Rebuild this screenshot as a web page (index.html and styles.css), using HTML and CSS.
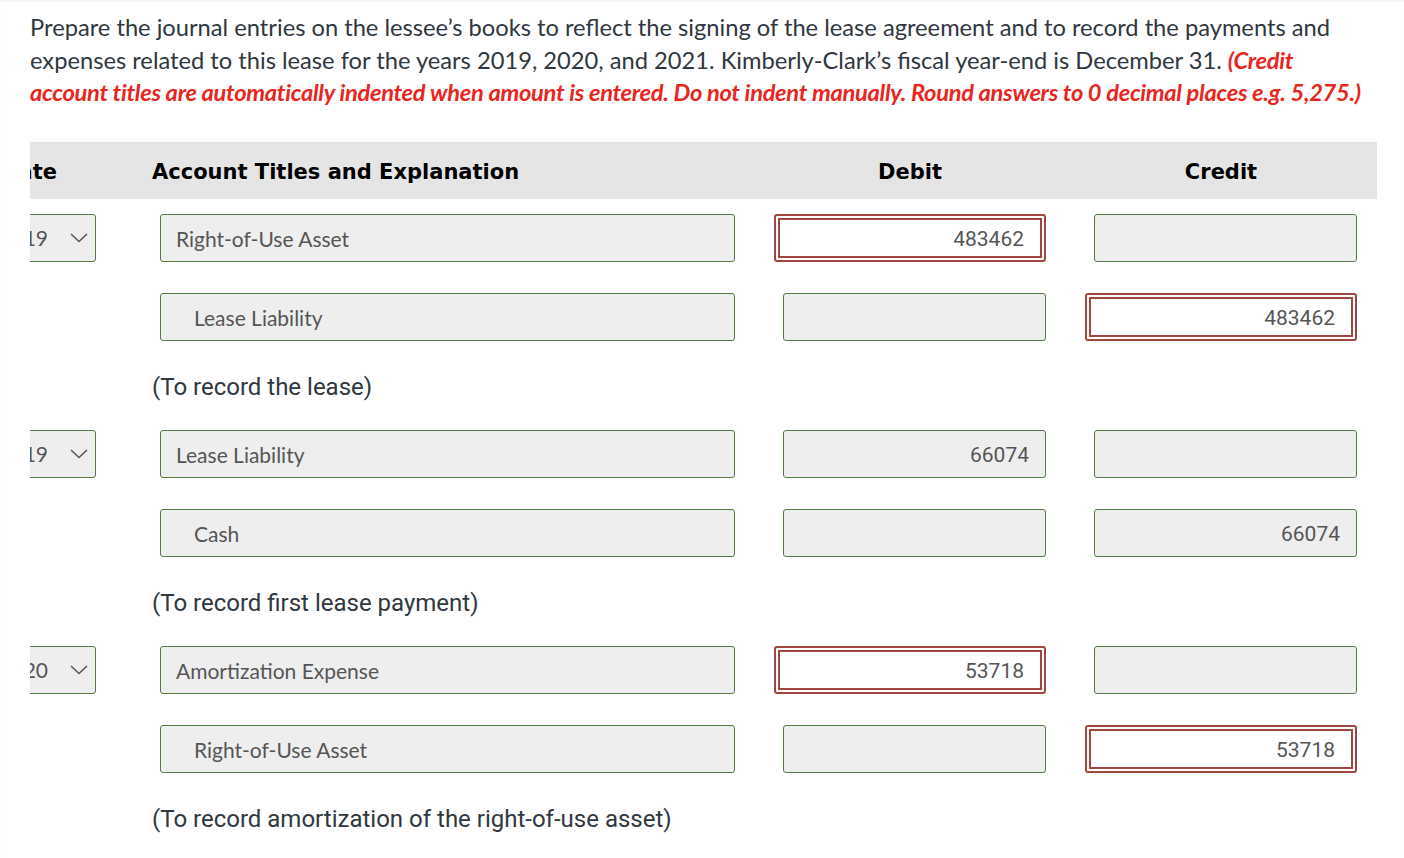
FILE: index.html
```html
<!DOCTYPE html>
<html lang="en">
<head>
<meta charset="utf-8">
<title>Journal entries</title>
<link rel="stylesheet" href="styles.css">
</head>
<body>
<div class="page">
  <p class="intro">Prepare the journal entries on the lessee’s books to reflect the signing of the lease agreement and to record the payments and expenses related to this lease for the years 2019, 2020, and 2021. Kimberly-Clark’s fiscal year-end is December 31. <em class="note">(Credit account titles are automatically indented when amount is entered. Do not indent manually. Round answers to 0 decimal places e.g. 5,275.)</em></p>

  <div class="sheet">
    <div class="table">
      <div class="grid head">
        <div class="h-date">Date</div>
        <div class="h-acct">Account Titles and Explanation</div>
        <div class="h-num">Debit</div>
        <div class="h-num h-credit">Credit</div>
      </div>

      <div class="entries">
        <div class="entry">
          <div class="grid line">
            <div class="date-cell"><div class="select"><span class="sel-text">Jan. 1, 2019</span><svg class="chev" viewBox="0 0 18 10"><path d="M1 1 L9 8.5 L17 1"/></svg></div></div>
            <div class="acct-cell"><div class="box acct">Right-of-Use Asset</div></div>
            <div class="num-cell"><div class="red"><div class="red-in">483462</div></div></div>
            <div class="num-cell credit"><div class="box num"></div></div>
          </div>
          <div class="grid line">
            <div class="date-cell"></div>
            <div class="acct-cell"><div class="box acct indent">Lease Liability</div></div>
            <div class="num-cell"><div class="box num"></div></div>
            <div class="num-cell credit"><div class="red"><div class="red-in">483462</div></div></div>
          </div>
          <div class="grid expl"><div></div><div class="expl-text">(To record the lease)</div></div>
        </div>

        <div class="entry">
          <div class="grid line">
            <div class="date-cell"><div class="select"><span class="sel-text">Jan. 1, 2019</span><svg class="chev" viewBox="0 0 18 10"><path d="M1 1 L9 8.5 L17 1"/></svg></div></div>
            <div class="acct-cell"><div class="box acct">Lease Liability</div></div>
            <div class="num-cell"><div class="box num">66074</div></div>
            <div class="num-cell credit"><div class="box num"></div></div>
          </div>
          <div class="grid line">
            <div class="date-cell"></div>
            <div class="acct-cell"><div class="box acct indent">Cash</div></div>
            <div class="num-cell"><div class="box num"></div></div>
            <div class="num-cell credit"><div class="box num">66074</div></div>
          </div>
          <div class="grid expl"><div></div><div class="expl-text">(To record first lease payment)</div></div>
        </div>

        <div class="entry">
          <div class="grid line">
            <div class="date-cell"><div class="select"><span class="sel-text">Dec. 31, 2020</span><svg class="chev" viewBox="0 0 18 10"><path d="M1 1 L9 8.5 L17 1"/></svg></div></div>
            <div class="acct-cell"><div class="box acct">Amortization Expense</div></div>
            <div class="num-cell"><div class="red"><div class="red-in">53718</div></div></div>
            <div class="num-cell credit"><div class="box num"></div></div>
          </div>
          <div class="grid line">
            <div class="date-cell"></div>
            <div class="acct-cell"><div class="box acct indent">Right-of-Use Asset</div></div>
            <div class="num-cell"><div class="box num"></div></div>
            <div class="num-cell credit"><div class="red"><div class="red-in">53718</div></div></div>
          </div>
          <div class="grid expl"><div></div><div class="expl-text">(To record amortization of the right-of-use asset)</div></div>
        </div>
      </div>
    </div>
  </div>
</div>
</body>
</html>
```

FILE: styles.css
```css
html, body {
  margin: 0;
  padding: 0;
  background: #ffffff;
}

body {
  font-family: Lato, "Open Sans", sans-serif;
  overflow: hidden;
}

.page {
  padding: 11px 27px 0 30px;
  box-shadow: inset 0 2px 2px -1px rgba(0, 0, 0, 0.08);
  height: 858px;
  box-sizing: border-box;
}

.intro {
  margin: 0;
  font-size: 23.7px;
  line-height: 32.5px;
  color: #2f3740;
  max-width: 1342px;
}

.note {
  font-style: italic;
  font-weight: 700;
  color: #e8261e;
  letter-spacing: -0.3px;
}

.sheet {
  margin-top: 33px;
  width: 1347px;
  overflow: hidden;
}

.table {
  margin-left: -130px;
  width: 1477px;
}

.grid {
  display: grid;
  grid-template-columns: 252px 622px 272px 311px;
}

.head {
  height: 57px;
  box-sizing: border-box;
  padding-top: 3px;
  align-items: center;
  background: #e5e5e5;
  font-family: "DejaVu Sans", Verdana, sans-serif;
  font-weight: 700;
  font-size: 21px;
  color: #000;
}

.h-date {
  text-align: right;
  padding-right: 95px;
}

.h-num {
  text-align: center;
}

.h-credit {
  padding-left: 39px;
}

.entries {
  display: flex;
  flex-direction: column;
  gap: 28px;
  padding-top: 15px;
}

.entry {
  display: flex;
  flex-direction: column;
  gap: 31px;
}

.line {
  height: 48px;
}

.date-cell {
  display: flex;
  justify-content: flex-end;
  padding-right: 56px;
}

.select {
  width: 190px;
  height: 48px;
  box-sizing: border-box;
  display: flex;
  align-items: center;
  padding-right: 7px;
  border: 1px solid #517d44;
  border-radius: 3px;
  background: #eeeeee;
  font-size: 21px;
  color: #555555;
}

.sel-text {
  flex: 1;
  text-align: right;
  white-space: nowrap;
}

.chev {
  flex-shrink: 0;
  width: 18px;
  height: 10px;
  margin-left: 22px;
  fill: none;
  stroke: #555555;
  stroke-width: 1.5;
}

.acct-cell {
  padding-left: 8px;
}

.box {
  height: 48px;
  box-sizing: border-box;
  display: flex;
  align-items: center;
  border: 1px solid #517d44;
  border-radius: 3px;
  background: #eeeeee;
  color: #555555;
}

.acct {
  width: 575px;
  padding-left: 15px;
  padding-top: 1px;
  font-size: 21px;
}

.acct.indent {
  padding-left: 33px;
}

.num {
  width: 263px;
  margin-left: 9px;
  justify-content: flex-end;
  padding-right: 16px;
  padding-top: 2px;
  font-family: Roboto, Arial, sans-serif;
  font-size: 21px;
}

.num-cell.credit {
  padding-left: 39px;
}

.red {
  width: 272px;
  height: 48px;
  box-sizing: border-box;
  border: 2px solid #a2473f;
  border-radius: 3px;
  padding: 2px;
  background: #ffffff;
}

.red-in {
  height: 100%;
  box-sizing: border-box;
  display: flex;
  align-items: center;
  justify-content: flex-end;
  border: 2px solid #a2473f;
  background: #ffffff;
  padding-right: 16px;
  padding-top: 2px;
  font-family: Roboto, Arial, sans-serif;
  font-size: 21px;
  color: #555555;
}

.expl {
  height: 30px;
  line-height: 30px;
}

.expl-text {
  font-family: Roboto, Arial, sans-serif;
  font-size: 24px;
  color: #2f3740;
  white-space: nowrap;
}
```
